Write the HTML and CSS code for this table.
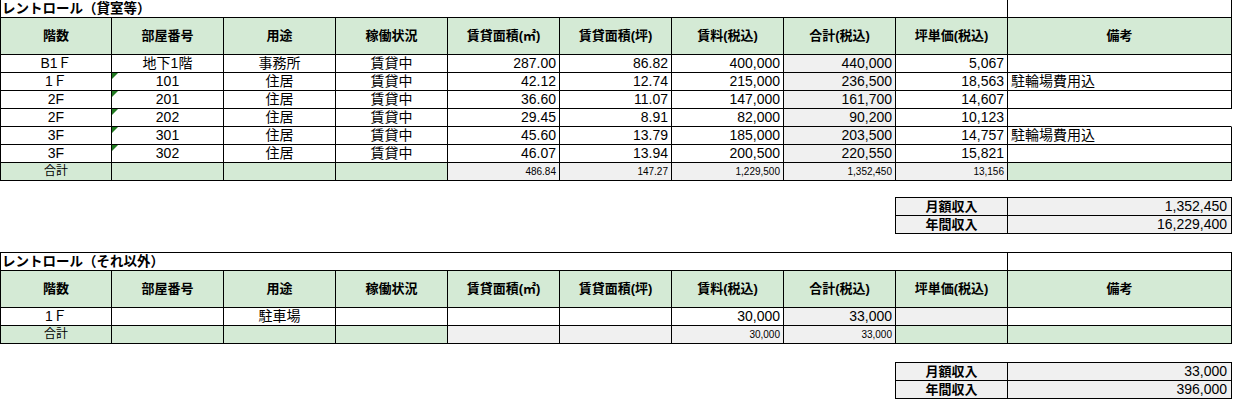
FILE: index.html
```html
<!DOCTYPE html>
<html lang="ja">
<head>
<meta charset="utf-8">
<title>レントロール</title>
<link rel="stylesheet" href="styles.css">
</head>
<body>
<div class="sheet">
  <div class="table">
    <div class="c title">レントロール（貸室等）</div>
    <div class="c"></div>

    <div class="c head">階数</div>
    <div class="c head">部屋番号</div>
    <div class="c head">用途</div>
    <div class="c head">稼働状況</div>
    <div class="c head">賃貸面積(㎡)</div>
    <div class="c head">賃貸面積(坪)</div>
    <div class="c head">賃料(税込)</div>
    <div class="c head">合計(税込)</div>
    <div class="c head">坪単価(税込)</div>
    <div class="c head">備考</div>

    <div class="c">B1Ｆ</div>
    <div class="c">地下1階</div>
    <div class="c">事務所</div>
    <div class="c">賃貸中</div>
    <div class="c num">287.00</div>
    <div class="c num">86.82</div>
    <div class="c num">400,000</div>
    <div class="c num gray">440,000</div>
    <div class="c num">5,067</div>
    <div class="c note"></div>

    <div class="c">1Ｆ</div>
    <div class="c flag">101</div>
    <div class="c">住居</div>
    <div class="c">賃貸中</div>
    <div class="c num">42.12</div>
    <div class="c num">12.74</div>
    <div class="c num">215,000</div>
    <div class="c num gray">236,500</div>
    <div class="c num">18,563</div>
    <div class="c note">駐輪場費用込</div>

    <div class="c">2F</div>
    <div class="c flag">201</div>
    <div class="c">住居</div>
    <div class="c">賃貸中</div>
    <div class="c num">36.60</div>
    <div class="c num">11.07</div>
    <div class="c num">147,000</div>
    <div class="c num gray">161,700</div>
    <div class="c num">14,607</div>
    <div class="c note"></div>

    <div class="c">2F</div>
    <div class="c flag">202</div>
    <div class="c">住居</div>
    <div class="c">賃貸中</div>
    <div class="c num">29.45</div>
    <div class="c num">8.91</div>
    <div class="c num">82,000</div>
    <div class="c num gray">90,200</div>
    <div class="c num">10,123</div>
    <div class="c note open"></div>

    <div class="c">3F</div>
    <div class="c flag">301</div>
    <div class="c">住居</div>
    <div class="c">賃貸中</div>
    <div class="c num">45.60</div>
    <div class="c num">13.79</div>
    <div class="c num">185,000</div>
    <div class="c num gray">203,500</div>
    <div class="c num">14,757</div>
    <div class="c note">駐輪場費用込</div>

    <div class="c">3F</div>
    <div class="c flag">302</div>
    <div class="c">住居</div>
    <div class="c">賃貸中</div>
    <div class="c num">46.07</div>
    <div class="c num">13.94</div>
    <div class="c num">200,500</div>
    <div class="c num gray">220,550</div>
    <div class="c num">15,821</div>
    <div class="c note"></div>

    <div class="c green total-label">合計</div>
    <div class="c green"></div>
    <div class="c green"></div>
    <div class="c green"></div>
    <div class="c small gray">486.84</div>
    <div class="c small gray">147.27</div>
    <div class="c small gray">1,229,500</div>
    <div class="c small gray">1,352,450</div>
    <div class="c small gray">13,156</div>
    <div class="c green"></div>
  </div>

  <div class="summary-row summary-row--first">
    <div class="summary">
      <div class="s-label">月額収入</div>
      <div class="s-value">1,352,450</div>
      <div class="s-label">年間収入</div>
      <div class="s-value">16,229,400</div>
    </div>
  </div>

  <div class="table table--boxed">
    <div class="c title">レントロール（それ以外）</div>
    <div class="c"></div>

    <div class="c head">階数</div>
    <div class="c head">部屋番号</div>
    <div class="c head">用途</div>
    <div class="c head">稼働状況</div>
    <div class="c head">賃貸面積(㎡)</div>
    <div class="c head">賃貸面積(坪)</div>
    <div class="c head">賃料(税込)</div>
    <div class="c head">合計(税込)</div>
    <div class="c head">坪単価(税込)</div>
    <div class="c head">備考</div>

    <div class="c">1Ｆ</div>
    <div class="c"></div>
    <div class="c">駐車場</div>
    <div class="c"></div>
    <div class="c"></div>
    <div class="c"></div>
    <div class="c num">30,000</div>
    <div class="c num gray">33,000</div>
    <div class="c gray"></div>
    <div class="c"></div>

    <div class="c green total-label">合計</div>
    <div class="c green"></div>
    <div class="c green"></div>
    <div class="c green"></div>
    <div class="c gray"></div>
    <div class="c gray"></div>
    <div class="c small gray">30,000</div>
    <div class="c small gray">33,000</div>
    <div class="c green"></div>
    <div class="c green"></div>
  </div>

  <div class="summary-row">
    <div class="summary">
      <div class="s-label">月額収入</div>
      <div class="s-value">33,000</div>
      <div class="s-label">年間収入</div>
      <div class="s-value">396,000</div>
    </div>
  </div>
</div>
</body>
</html>
```

FILE: styles.css
```css
* {
  box-sizing: border-box;
}

html, body {
  margin: 0;
  padding: 0;
  background: #ffffff;
}

body {
  font-family: "Liberation Sans", "Noto Sans CJK JP", sans-serif;
  font-size: 14px;
  color: #000000;
}

.sheet {
  width: 1232px;
}

.table {
  display: grid;
  grid-template-columns: 111px repeat(8, 112px) 224px;
  border-left: 1px solid #000;
  width: 1232px;
}

.table--boxed {
  border-top: 1px solid #000;
  margin-top: 18px;
}

.c {
  position: relative;
  height: 18px;
  line-height: 17px;
  border-right: 1px solid #000;
  border-bottom: 1px solid #000;
  text-align: center;
  white-space: nowrap;
  overflow: visible;
}

.title {
  grid-column: 1 / 10;
  text-align: left;
  font-weight: bold;
  font-size: 13.5px;
  padding-left: 1px;
}

.head {
  height: 37px;
  line-height: 36px;
  background: #d4ead5;
  font-weight: bold;
  font-size: 13px;
}

.num {
  text-align: right;
  padding-right: 3px;
}

.small {
  text-align: right;
  padding-right: 3px;
  font-size: 10px;
  line-height: 18px;
}

.gray {
  background: #f0f0f0;
}

.green {
  background: #d4ead5;
}

.total-label {
  font-size: 12px;
}

.note {
  text-align: left;
  padding-left: 3px;
}

.open {
  border-right-color: transparent;
}

.flag::before {
  content: "";
  position: absolute;
  left: 0;
  top: 0;
  width: 0;
  height: 0;
  border-top: 6px solid #217a21;
  border-right: 6px solid transparent;
}

.summary-row {
  display: flex;
  justify-content: flex-end;
  width: 1232px;
  margin-top: 18px;
}

.summary-row--first {
  margin-top: 16px;
}

.summary {
  display: grid;
  grid-template-columns: 113px 224px;
  border-top: 1px solid #000;
}

.s-label,
.s-value {
  height: 18px;
  line-height: 17px;
  background: #f0f0f0;
  border-right: 1px solid #000;
  border-bottom: 1px solid #000;
}

.s-label {
  border-left: 1px solid #000;
  text-align: center;
  font-weight: bold;
  font-size: 13px;
}

.s-value {
  text-align: right;
  padding-right: 4px;
}
```
